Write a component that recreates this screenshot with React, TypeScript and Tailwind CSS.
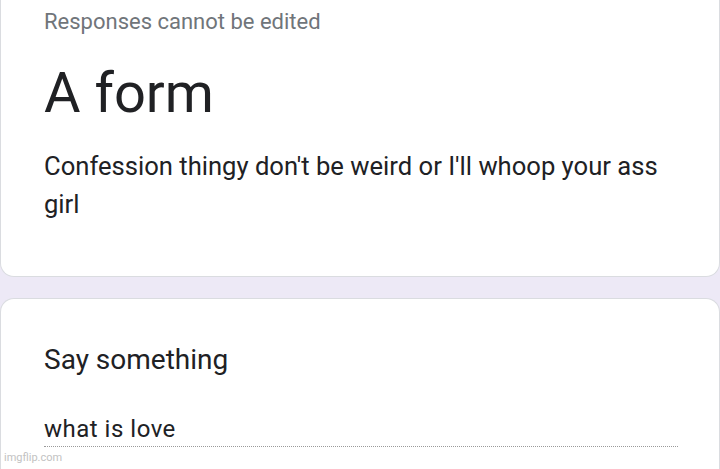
import React from 'react';

export default function App() {
  return (
    <div
      className="relative w-[720px] h-[469px] overflow-hidden bg-[#ede9f6]"
      style={{ fontFamily: 'Roboto, "Liberation Sans", sans-serif' }}
    >
      <div className="bg-white border-x border-b border-[#dadce0] rounded-b-[14px] px-[43px] pt-[8px] h-[277px]">
        <p className="text-[22px] leading-[28px] text-[#70757a]">Responses cannot be edited</p>
        <h1 className="mt-[25px] text-[56px] leading-[64px] text-[#202124]">A form</h1>
        <p className="mt-[22px] text-[25.6px] leading-[38px] text-[#202124]">
          Confession thingy don't be weird or I'll whoop your ass girl
        </p>
      </div>
      <div className="mt-[21px] bg-white border-x border-t border-[#dadce0] rounded-t-[14px] px-[43px] pt-[43px] h-[200px]">
        <p className="text-[28px] leading-[36px] text-[#202124]">Say something</p>
        <div className="mt-[36px] w-[634px] border-b border-dotted border-[#9a9a9a]">
          <p className="text-[24px] leading-[30px] text-[#202124] tracking-[0.5px] pb-[2px]">what is love</p>
        </div>
      </div>
      <span className="absolute left-[4px] bottom-[3px] text-[11px] text-[#c2c2c2]">imgflip.com</span>
    </div>
  );
}
